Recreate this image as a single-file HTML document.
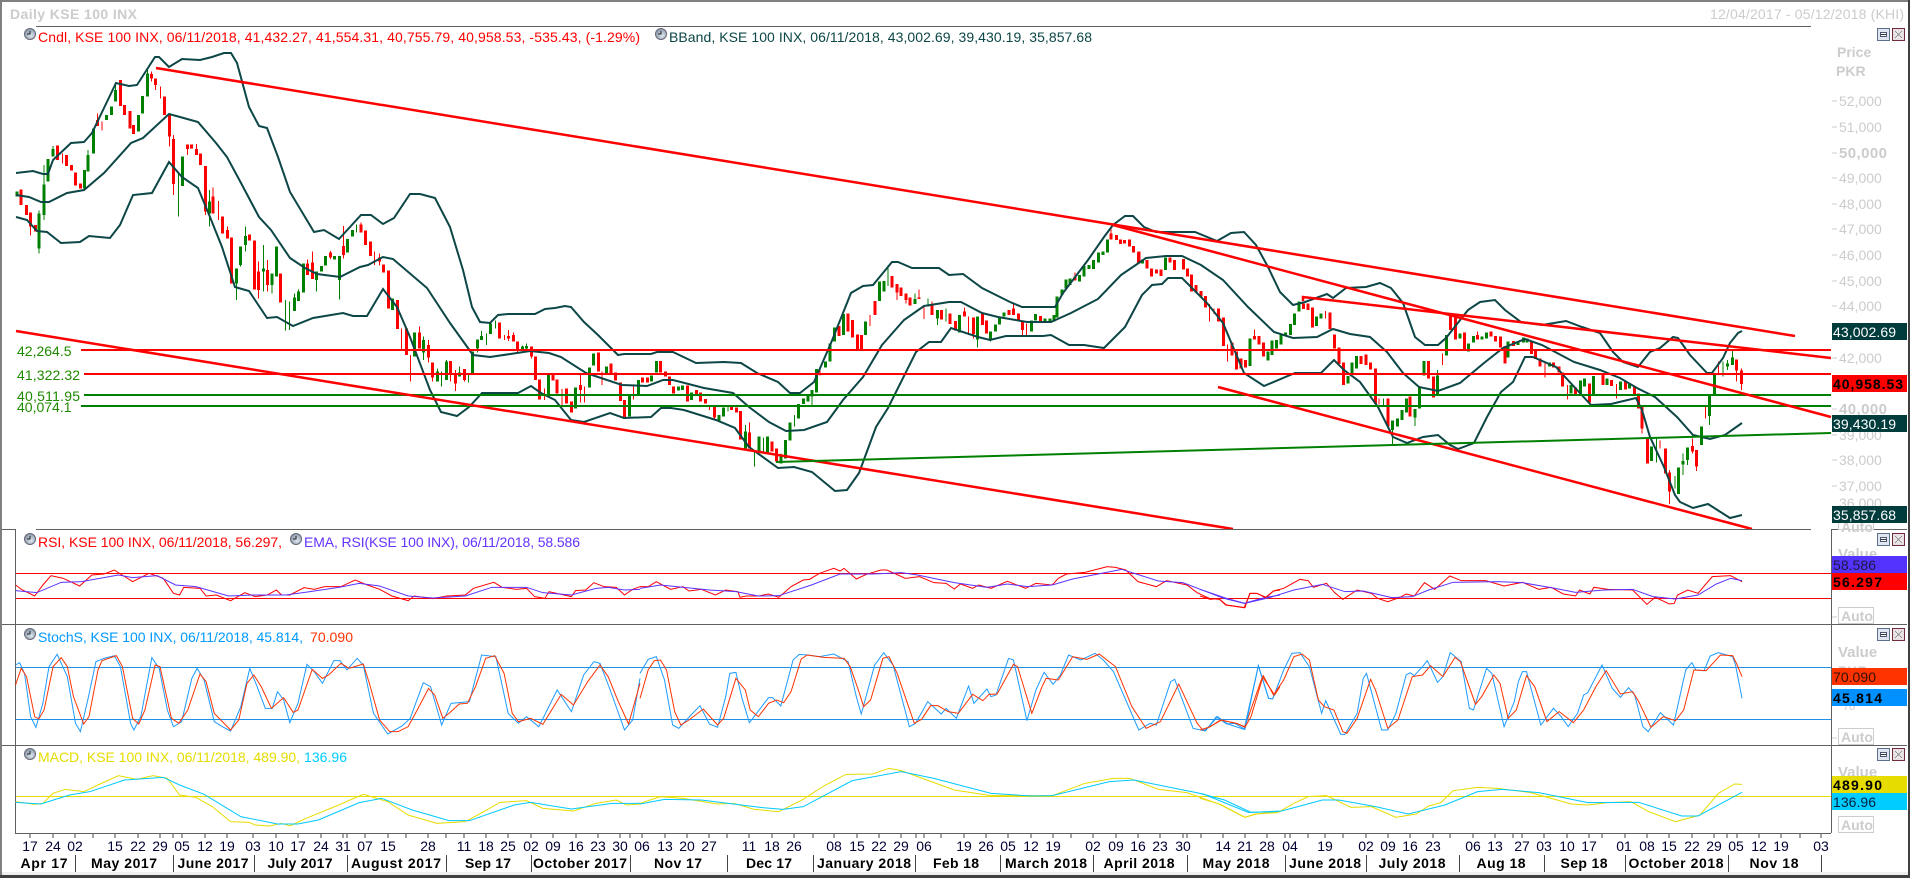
<!DOCTYPE html>
<html>
<head>
<meta charset="utf-8">
<title>Daily KSE 100 INX</title>
<style>
html,body{margin:0;padding:0;background:#fff;width:1910px;height:878px;overflow:hidden}
svg{display:block;font-family:"Liberation Sans",sans-serif;font-size:14px}
svg path,svg polyline,svg line{vector-effect:non-scaling-stroke;fill:none}
.rb{stroke:#ff0000;stroke-width:3;shape-rendering:crispEdges}
.rw{stroke:#ff0000;stroke-width:1;shape-rendering:crispEdges}
.gb{stroke:#008000;stroke-width:3;shape-rendering:crispEdges}
.gw{stroke:#008000;stroke-width:1;shape-rendering:crispEdges}
.bb{stroke:#0c4646;stroke-width:2}
.tr{stroke:#ff0000;stroke-width:2.5}
.hr{stroke:#ff0000;stroke-width:2;shape-rendering:crispEdges}
.hg{stroke:#008000;stroke-width:2;shape-rendering:crispEdges}
.dv{stroke:#606060;stroke-width:1;shape-rendering:crispEdges}
.sc{fill:#cccccc}
.d{fill:#000033;text-anchor:middle}
.m{fill:#000;font-weight:bold;text-anchor:middle;font-size:14px}
.tick{stroke:#444;stroke-width:1;shape-rendering:crispEdges}
.st{stroke:#ccc;stroke-width:1;shape-rendering:crispEdges}
</style>
</head>
<body>
<svg width="1910" height="878" viewBox="0 0 1910 878" xmlns="http://www.w3.org/2000/svg">
<defs>
<radialGradient id="ck" cx="0.6" cy="0.65" r="0.7"><stop offset="0" stop-color="#dfe7ef"/><stop offset="1" stop-color="#7f8fa3"/></radialGradient>
<g id="clock"><circle cx="0" cy="0" r="5.5" fill="url(#ck)" stroke="#667" stroke-width="1"/><path d="M0-3V0H-3" stroke="#222" stroke-width="1"/></g>
<g id="btns">
<rect x="0.5" y="0.5" width="12" height="12" fill="#dfe6f0" stroke="#5d6f8c"/><rect x="3.5" y="4.5" width="6" height="4" fill="#fff" stroke="#4a5670"/><rect x="4" y="6" width="5" height="1" fill="#333"/>
<rect x="15.5" y="0.5" width="12" height="12" fill="#e9dfe2" stroke="#6e2c3c"/><path d="M18 3L25 10M25 3L18 10" stroke="#fff" stroke-width="2.5"/><path d="M18 3L25 10M25 3L18 10" stroke="#8a8a8a" stroke-width="1"/>
</g>
</defs>
<rect width="1910" height="878" fill="#fff"/>

<!-- candles left -->
<g transform="matrix(.40816 0 0 .33333 0 0)">
<path class="gw" d="M96 632V760M108 495V660M130 438V470M216 450V465M283 255V270M361 210V220M437 520V650M513 570V680M579 850V900M601 680V755M645 735V875M667 855V880M589 795V800"/>
<path class="gb" d="M42 575V590M96 640V745M108 553V645M118 477V545M130 447V470M207 510V565M216 465V515M229 385V460M261 345V360M273 320V345M283 270V305M339 345V395M349 288V340M361 220V290M447 470V558M513 605V640M579 805V850M589 740V795M601 708V735M645 805V815M667 820V855M677 740V830"/>
<path class="rw" d="M75 680V707M153 460V490M239 340V360M250 365V392M371 215V245M381 255V270M393 260V295M415 410V440M425 405V585M459 447V465M481 432V447M503 635V645M522 562V590M535 603V660M557 680V690M633 785V895M655 780V875"/>
<path class="rb" d="M52 568V615M65 615V645M75 637V680M87 675V695M141 437V480M163 465V498M175 495V512M185 518V557M197 550V565M239 360V378M295 240V318M305 315V345M318 333V385M327 375V402M371 222V235M381 235V255M403 290V345M415 345V410M425 417V552M459 433V447M469 433V445M481 447V465M491 460V495M503 498V635M522 590V640M545 650V700M557 690V715M567 712V850M611 704V722M623 722V868M633 815V870M655 810V855"/>
</g>
<g transform="matrix(.33333 0 0 .33333 150 200)">
<path class="gw" d="M406 300V392M418 305V390M433 280V292M445 268V275M499 240V275M568 240V298M619 73V98M820 410V480M862 505V515M874 515V560M889 480V485M928 500V517M955 520V548M982 445V457M994 393V408M1010 400V435M1036 362V385M1117 437V450M1129 430V447"/>
<path class="gb" d="M433 292V333M445 275V303M460 190V278M499 215V240M514 198V215M526 168V197M553 168V178M568 168V240M592 117V157M607 90V110M727 295V330M793 398V470M820 420V458M862 515V545M889 485V540M928 517V530M968 455V520M982 418V445M994 408V420M1022 370V402M1117 440V447M1129 438V445M1195 525V590"/>
<path class="rw" d="M472 178V190M487 155V188M541 153V177M580 78V138M580 165V175M633 68V73M673 155V195M688 160V197M755 385V447M781 465V545M808 380V397M835 420V487M848 532V545M901 520V545M916 510V573M943 540V545M1063 405V420M1075 390V423M1090 398V405M1102 450V460M1144 475V440M1183 565V600"/>
<path class="rb" d="M391 220V308M472 190V225M487 188V237M541 158V172M580 138V165M633 73V97M646 92V135M661 125V168M688 173V185M700 193V218M715 212V325M742 300V387M769 385V465M808 397V445M835 435V472M848 487V532M901 483V520M916 520V550M943 507V540M1048 368V415M1075 408V415M1090 405V425M1102 425V450M1144 440V470M1156 470V540M1168 538V598"/>
</g>
<g transform="matrix(.40816 0 0 .33333 500 200)">
<path class="gw" d="M558 615V635M624 750V800M645 712V755M689 760V765M721 645V680M765 590V615M951 197V258M1017 280V297M1049 295V320M1072 355V375M1093 325V365M1170 418V443M1202 420V425M601 675V745"/>
<path class="gb" d="M185 563V625M219 503V563M229 460V497M261 500V520M317 587V650M339 540V585M371 527V545M383 483V518M437 560V572M447 557V570M469 577V600M536 645V665M547 622V650M601 695V745M634 710V755M655 710V758M689 765V790M699 720V775M711 668V722M731 612V655M743 595V612M754 582V605M765 570V590M775 507V578M797 485V502M809 430V485M819 382V425M841 342V405M896 365V405M930 245V303M941 243V275M1017 297V312M1049 313V320M1072 330V355M1126 345V398M1170 350V418M1202 395V420M1214 373V395M1224 350V373M1235 337V350M1302 362V395M1312 342V362M1335 355V365M1347 355V365M1357 345V365M1365 290V352M1377 268V285M1387 238V265M1397 235V255M1420 225V245M1431 198V230M1443 195V207M1454 180V207M1466 158V187M1477 155V165M1488 118V157"/>
<path class="rw" d="M152 567V620M197 525V608M207 560V608M250 515V555M327 560V598M525 652V660M611 668V697M784 505V527M907 345V378M973 278V300M995 300V310M1027 268V297M1039 318V357M1059 305V313M1138 322V335M1148 350V405M1160 402V415M1258 310V325M1280 390V405M1290 370V410M1409 217V243M1497 85V100M513 615V630"/>
<path class="rb" d="M130 525V542M140 538V580M163 565V610M175 605V638M197 555V570M241 457V515M272 490V520M283 518V542M295 548V603M305 600V655M349 533V547M361 533V547M393 483V517M405 515V530M415 530V555M425 560V580M459 557V605M481 570V585M491 577V605M503 597V610M525 620V652M567 620V630M579 622V638M589 633V718M611 697V745M667 725V755M677 745V785M830 378V408M853 340V395M864 360V412M876 403V450M886 405V450M919 303V345M961 228V262M973 252V278M983 263V288M995 280V300M1005 292V317M1027 293V297M1059 313V345M1082 330V358M1103 340V372M1116 363V392M1138 335V350M1160 352V402M1182 340V375M1192 362V400M1247 330V345M1258 325V345M1270 340V360M1280 362V390M1324 348V365M1409 230V240M1497 100V118M1510 105V120M1520 118V132M1530 120V130M1542 118V140M1552 138V158M1564 158V190"/>
</g>
<g transform="matrix(.40816 0 0 .33333 1060 210)">
<path class="gw" d="M792 565V590M815 660V705M870 622V648M925 480V497"/>
<path class="gb" d="M202 148V160M258 143V180M465 385V468M509 425V452M520 392V435M531 390V415M542 375V403M553 368V378M565 342V375M575 310V345M586 275V305M628 320V348M640 310V325M706 498V520M716 458V495M727 438V475M815 632V660M827 625V650M838 600V630M849 565V608M870 597V622M881 530V595M892 453V497M925 497V555M947 375V437M980 370V385M1001 400V425M1013 378V398M1034 380V388M1045 368V385M1097 395V443M1122 395V405M1135 382V398M1144 385V398M1199 458V470M1252 525V550M1275 512V553M1285 505V530M1307 498V555M1340 505V525M1373 515V540M1395 520V535"/>
<path class="rw" d="M366 282V335M377 295V312M410 403V455M476 358V378M650 303V325M781 565V583M937 430V465M1023 365V375M1188 458V502M1243 525V568M1363 522V566M1426 655V670"/>
<path class="rb" d="M193 125V160M213 150V175M224 175V200M236 178V190M247 178V198M269 143V157M280 150V180M303 147V178M312 175V200M322 193V245M333 225V247M345 243V260M356 258V292M388 295V335M400 322V408M421 397V437M432 425V478M443 445V475M455 450V472M476 378V388M487 378V403M498 398V440M597 280V297M607 280V300M619 292V352M662 308V357M672 373V415M684 413V462M694 458V525M738 438V462M750 433V465M761 458V478M773 475V582M804 565V650M858 560V620M903 453V505M915 500V562M957 315V360M969 315V388M991 368V420M1023 375V388M1056 365V380M1067 378V395M1079 380V412M1090 408V460M1111 393V408M1155 395V432M1165 420V447M1176 445V470M1209 458V472M1222 470V487M1231 487V530M1263 533V553M1297 520V578M1330 490V525M1351 510V528M1385 515V538M1407 530V555M1417 550V595M1426 590V655"/>
</g>
<g transform="matrix(.33333 0 0 .33333 1600 300)">
<path class="gw" d="M169 415V488M225 528V565M249 460V525M262 480V495M328 348V375M369 185V230M397 150V172M382 180V210"/>
<path class="gb" d="M155 440V483M235 503V582M249 483V493M262 443V480M304 380V435M328 285V348M343 225V285M382 190V200M397 172V195"/>
<path class="rw" d="M180 422V445M208 510V612M277 415V460M290 500V513M317 320V355M355 185V220M410 212V245M425 205V270"/>
<path class="rb" d="M143 415V490M196 445V520M208 518V575M277 438V455M290 450V500M410 178V212M425 212V252"/>
</g>

<!-- Bollinger -->
<polyline class="bb" points="16,173 33,171 43,174 48,174 53,160 71,143 84,142 92,133 104,108 116,83 129,86 137,85 155,57 159,57 169,67 182,59 200,60 212,57 224,53 231,53 237,63 249,107 259,126 267,128 278,157 290,192 314,232 324,230 339,239 361,215 371,215 383,224 394,218 410,194 420,194 435,198 450,227 463,270 472,307 480,322 490,323 498,315 508,314 535,314 545,309 555,308 565,306 571,307 584,322 598,335 618,355 624,354 651,354 657,352 673,352 696,363 724,362 741,363 757,373 778,382 790,393 800,393 814,382 831,343 843,313 851,293 863,286 873,285 892,262 898,262 912,268 939,268 949,275 963,274 982,288 1010,302 1022,307 1055,307 1063,293 1088,260 1104,237 1113,225 1125,216 1133,216 1144,227 1156,232 1195,232 1217,241 1231,233 1244,232 1256,245 1268,267 1280,292 1293,305 1305,302 1327,294 1333,298 1346,288 1366,287 1380,283 1391,288 1403,303 1415,337 1425,345 1438,345 1446,338 1468,310 1480,302 1495,300 1505,310 1521,322 1542,325 1566,321 1582,327 1600,333 1613,352 1623,362 1638,367 1650,352 1660,348 1673,337 1678,338 1690,355 1707,373 1712,373 1723,358 1730,343 1738,333 1742,331"/>
<polyline class="bb" points="16,195 29,197 41,202 49,202 67,193 84,190 104,173 131,143 143,138 169,114 180,117 198,122 216,143 227,157 241,183 259,217 271,230 290,258 305,268 317,274 340,277 360,267 368,265 383,257 393,259 427,288 450,323 473,355 490,357 517,353 530,351 549,353 561,357 586,373 598,377 622,385 647,386 663,380 673,380 704,388 733,393 749,407 769,422 786,431 804,430 827,422 843,400 863,377 882,345 904,320 924,306 949,302 961,302 982,313 998,317 1027,322 1051,322 1071,313 1098,299 1121,275 1146,258 1166,256 1182,256 1201,265 1223,280 1248,307 1274,332 1293,338 1317,337 1333,329 1350,334 1370,337 1387,352 1403,373 1419,387 1438,391 1460,383 1484,363 1503,348 1525,339 1542,345 1574,362 1600,370 1620,378 1637,388 1655,397 1677,417 1693,435 1710,439 1725,435 1742,423"/>
<polyline class="bb" points="16,217 27,220 37,231 47,232 61,243 80,242 89,236 110,238 120,225 133,195 152,193 169,162 182,177 198,188 210,217 222,247 235,287 249,291 267,318 277,317 293,326 313,318 343,313 353,316 367,316 383,289 397,307 410,337 430,390 441,412 457,416 469,407 482,393 518,393 531,386 541,393 555,400 571,420 584,422 610,413 624,418 651,417 661,408 671,408 684,410 716,420 735,428 749,447 778,468 794,467 812,472 835,491 847,490 859,473 876,427 888,408 916,352 929,342 941,342 951,328 978,337 990,340 1006,336 1043,336 1051,335 1069,345 1084,345 1104,348 1125,327 1142,295 1152,285 1162,284 1168,278 1182,278 1207,303 1223,323 1244,373 1264,386 1295,373 1321,373 1334,360 1344,370 1360,382 1378,407 1393,437 1407,443 1423,437 1438,435 1450,445 1458,449 1474,443 1487,417 1501,392 1513,382 1525,357 1533,357 1556,367 1566,378 1591,405 1611,404 1636,398 1642,410 1650,437 1664,467 1675,495 1680,502 1693,508 1708,504 1730,518 1742,515"/>

<!-- levels and trend lines -->
<line class="hr" x1="81" y1="350" x2="1831" y2="350"/>
<line class="hr" x1="84" y1="374" x2="1831" y2="374"/>
<line class="hg" x1="84" y1="395" x2="1831" y2="395"/>
<line class="hg" x1="81" y1="406" x2="1831" y2="406"/>
<line class="tr" x1="156" y1="68" x2="1795" y2="336"/>
<line class="tr" x1="1113" y1="225" x2="1831" y2="417"/>
<path class="tr" d="M1303 301V297L1831 358"/>
<line class="tr" x1="16" y1="331" x2="1233" y2="529"/>
<line class="tr" x1="1218" y1="387" x2="1752" y2="529"/>
<line class="hg" x1="776" y1="462" x2="1831" y2="433" style="shape-rendering:auto"/>

<g fill="#1f8a00">
<text x="17" y="356">42,264.5</text>
<text x="17" y="380" textLength="63">41,322.32</text>
<text x="17" y="401" textLength="63">40,511.95</text>
<text x="17" y="412">40,074.1</text>
</g>

<!-- white out below the price pane -->
<rect x="2" y="530" width="1829" height="303" fill="#fff"/>

<!-- dividers -->
<line class="dv" x1="36" y1="26.5" x2="1811" y2="26.5"/>
<line class="dv" x1="2" y1="529.5" x2="15" y2="529.5"/>
<line class="dv" x1="36" y1="529.5" x2="1811" y2="529.5"/>
<line class="dv" x1="1831" y1="529.5" x2="1907" y2="529.5"/>
<line class="dv" x1="2" y1="624.5" x2="1907" y2="624.5"/>
<line class="dv" x1="2" y1="745.5" x2="1907" y2="745.5"/>
<line class="dv" x1="15" y1="833.5" x2="1831" y2="833.5"/>
<line class="dv" x1="15.5" y1="529" x2="15.5" y2="833"/>
<line class="dv" x1="1831.5" y1="529" x2="1831.5" y2="833"/>

<!-- panel levels -->
<g style="shape-rendering:crispEdges">
<rect x="16" y="573" width="1815" height="1" fill="#ff0000"/>
<rect x="16" y="598" width="1815" height="1" fill="#ff0000"/>
<rect x="16" y="667" width="1815" height="1" fill="#1e90e6"/>
<rect x="16" y="719" width="1815" height="1" fill="#1e90e6"/>
<rect x="16" y="796" width="1815" height="1" fill="#e6dc00"/>
</g>

<!-- RSI -->
<g stroke-width="1" fill="none">
<g transform="matrix(.40816 0 0 .33333 0 510)">
<polyline stroke="#ff0000" points="38,225 55,240 85,258 105,225 125,197 155,205 195,228 225,195 255,192 280,180 325,215 365,190 400,205 425,250 440,255 450,232 490,235 505,258 530,255 565,272 600,248 625,260 655,255 677,240 690,255 710,255 745,233 770,238 795,230 835,230 870,210 900,225 930,238 960,258 1000,272 1015,258 1060,266 1095,258 1140,255 1160,235 1210,217 1230,232 1265,238 1290,235 1310,260 1335,265 1345,245 1400,260 1410,242 1435,240 1455,218 1480,230 1510,232 1530,255 1550,238 1568,230"/>
<polyline stroke="#5a32ff" points="38,242 90,248 150,217 200,215 290,195 325,203 385,197 430,225 480,230 560,258 620,255 700,255 760,245 830,232 880,220 930,228 1000,258 1060,264 1140,258 1205,232 1290,232 1330,248 1400,255 1460,235 1490,232 1530,240 1568,238"/>
<polyline stroke="#1e9bff" points="38,465 48,458 60,490 75,620 88,652 105,580 120,470 140,433 165,500 185,640 197,665 215,570 235,455 255,445 280,437 295,470 320,640 328,660 345,620 372,443 390,475 410,600 425,650 445,635 470,505 483,475 500,510 525,635 545,650 565,663 590,590 612,475 630,530 650,595 667,595 680,545 695,570 710,638 730,580 752,463 770,485 790,520 818,452 833,452 850,480 875,445 890,465 915,610 950,672 985,648 1005,625 1037,518 1055,530 1082,645 1105,580 1125,578 1150,575 1180,435 1215,440 1245,610 1270,640 1290,620 1320,650 1365,540 1400,605 1430,495 1455,455 1470,460 1495,540 1530,660 1550,630 1568,505"/>
<polyline stroke="#ff3300" points="38,525 52,475 65,500 85,620 95,627 108,600 130,470 150,443 165,470 180,560 205,642 218,620 240,480 250,452 285,437 300,470 325,625 340,642 355,600 380,465 392,470 420,625 438,640 460,600 490,492 505,515 525,610 565,660 585,630 605,520 622,495 640,530 665,595 695,563 718,607 730,600 765,478 790,505 805,495 835,460 855,475 890,462 905,520 930,630 955,665 975,665 1000,650 1020,605 1050,535 1065,555 1085,625 1105,605 1125,582 1145,580 1165,530 1190,445 1212,437 1235,490 1255,610 1270,635 1300,625 1330,643 1375,553 1405,585 1440,515 1470,465 1490,500 1515,575 1540,642 1568,520"/>
<polyline stroke="#e6dc00" points="38,875 85,883 105,880 130,850 160,838 205,845 240,825 290,797 335,808 375,797 410,805 440,855 480,862 520,890 565,935 610,937 625,945 660,948 690,940 710,948 750,925 830,885 890,853 950,875 1000,915 1070,940 1140,935 1185,905 1225,877 1290,872 1330,895 1405,903 1460,880 1510,870 1535,885 1568,882"/>
<polyline stroke="#00c8ff" points="38,877 100,882 170,855 220,845 305,810 400,802 440,825 500,853 590,920 680,942 730,942 780,930 880,878 935,865 1010,900 1100,932 1150,932 1260,885 1300,877 1400,897 1500,880 1568,880"/>
</g>
<g transform="matrix(.40816 0 0 .33333 640 510)">
<polyline stroke="#ff0000" points="0,230 20,230 40,215 75,238 105,230 120,243 150,238 185,255 210,240 240,245 245,262 260,258 290,258 315,252 340,262 370,230 400,210 415,208 440,190 475,175 490,183 500,175 530,207 555,193 590,180 605,180 650,205 685,200 720,218 750,220 770,237 785,222 815,235 830,225 860,235 900,214 945,235 970,220 1010,225 1025,205 1045,192 1090,187 1145,170 1165,172 1190,180 1220,215 1265,230 1290,212 1340,225 1365,248 1395,265 1420,268 1435,285 1480,293 1495,250 1510,250 1535,262 1552,243 1568,240"/>
<polyline stroke="#5a32ff" points="0,235 50,225 170,240 235,245 290,258 340,257 420,225 490,192 570,192 640,188 680,195 770,218 850,232 900,222 950,230 1010,225 1060,207 1180,178 1270,213 1330,218 1430,265 1480,280 1530,263 1568,255"/>
<polyline stroke="#1e9bff" points="0,490 20,448 40,440 60,510 80,645 95,655 110,635 125,615 147,587 170,642 190,652 210,560 220,490 235,487 250,565 268,638 315,563 325,563 345,588 375,450 390,433 410,435 440,440 475,432 510,455 530,560 542,612 575,465 597,428 620,465 660,650 675,640 705,575 738,612 750,595 775,625 805,528 818,580 850,537 860,560 872,555 903,445 915,450 948,632 970,540 990,487 1012,523 1030,495 1050,435 1080,450 1115,430 1135,450 1160,485 1222,660 1250,640 1265,645 1300,515 1310,508 1355,655 1385,663 1415,620 1440,642 1480,658 1515,467 1540,565 1550,567 1568,510"/>
<polyline stroke="#ff3300" points="0,565 20,480 35,452 50,450 65,480 85,605 100,645 120,630 155,597 190,645 205,625 235,505 258,540 270,600 290,620 315,580 335,570 352,578 370,545 395,447 410,435 450,442 500,445 515,470 535,540 548,590 565,570 595,445 610,440 630,490 672,640 690,628 712,587 730,587 755,605 780,610 815,553 840,572 855,553 875,552 915,463 925,470 960,610 985,530 995,505 1025,510 1060,440 1095,448 1125,432 1165,470 1205,590 1240,655 1275,635 1320,522 1365,640 1380,662 1425,630 1465,642 1482,650 1525,500 1555,555 1568,530"/>
<polyline stroke="#e6dc00" points="0,880 50,860 105,865 190,882 230,880 280,898 340,905 400,868 450,828 505,793 570,792 610,775 640,782 770,840 860,857 1010,857 1090,820 1160,805 1200,805 1270,838 1340,848 1420,883 1482,922 1510,912 1568,903"/>
<polyline stroke="#00c8ff" points="0,882 60,868 150,870 300,893 350,898 400,890 520,812 640,785 720,805 860,850 960,858 1010,857 1150,815 1210,810 1290,830 1380,852 1490,907 1568,905"/>
</g>
<g transform="matrix(.40816 0 0 .33333 1200 510)">
<polyline stroke="#ff0000" points="0,258 25,268 45,265 65,285 110,293 122,250 140,250 160,263 180,243 205,235 245,208 265,212 278,232 310,220 330,248 350,268 385,240 420,250 435,265 460,275 490,262 505,252 525,258 550,218 575,238 612,198 640,212 700,212 745,228 790,217 830,238 860,232 890,252 920,258 930,240 955,252 965,232 1000,238 1060,240 1095,283 1115,262 1150,282 1162,280 1170,255 1195,240 1220,250 1255,200 1300,197 1328,215"/>
<polyline stroke="#5a32ff" points="0,238 65,265 110,280 170,263 230,240 300,223 355,245 400,243 470,263 520,260 560,240 620,217 730,215 790,218 870,235 920,247 990,240 1060,238 1110,260 1165,267 1220,255 1265,222 1300,205 1328,212"/>
<polyline stroke="#1e9bff" points="0,660 15,660 40,620 65,642 85,640 110,658 143,467 168,565 178,567 205,480 225,430 245,428 268,470 298,610 308,572 345,673 355,673 385,610 400,505 408,490 445,660 460,660 480,610 505,495 515,488 525,497 545,470 557,452 582,517 595,500 613,428 640,455 660,595 670,600 702,475 715,490 745,650 770,575 780,515 790,485 800,485 835,645 866,595 885,620 902,650 925,610 940,555 950,548 985,465 1010,535 1030,562 1050,533 1065,555 1085,650 1098,665 1128,608 1160,645 1190,480 1205,458 1215,480 1235,482 1250,438 1270,428 1305,440 1312,465 1328,565"/>
<polyline stroke="#ff3300" points="0,660 25,650 50,630 90,640 110,652 125,620 155,497 180,555 205,510 230,440 250,432 268,450 290,570 305,590 328,600 350,665 360,670 385,625 418,508 430,540 460,655 485,630 520,500 545,495 565,467 595,500 625,442 638,455 675,583 690,560 720,495 735,520 755,625 775,600 800,497 820,530 850,635 880,605 915,638 940,600 970,530 995,482 1030,552 1060,545 1075,575 1105,652 1135,620 1165,632 1185,600 1210,480 1240,482 1275,435 1305,437 1315,462 1328,500"/>
<polyline stroke="#e6dc00" points="0,865 50,883 110,922 135,912 190,908 230,880 265,860 310,857 370,892 420,890 480,922 530,912 560,888 590,878 620,842 680,832 730,835 810,848 910,882 950,885 1000,878 1055,875 1100,905 1165,935 1225,915 1270,850 1310,822 1328,823"/>
<polyline stroke="#00c8ff" points="0,850 60,870 125,907 200,903 300,870 340,870 430,890 510,912 600,885 680,845 740,838 830,848 950,878 1075,877 1180,918 1220,918 1328,847"/>
</g>
</g>

<!-- header -->
<text x="10" y="19" class="sc" font-weight="bold" textLength="127">Daily KSE 100 INX</text>
<text x="1710" y="19" class="sc" textLength="194">12/04/2017 - 05/12/2018 (KHI)</text>

<!-- legends -->
<use href="#clock" x="30" y="34"/>
<text x="38" y="42" fill="#ff0000" textLength="602">Cndl, KSE 100 INX, 06/11/2018, 41,432.27, 41,554.31, 40,755.79, 40,958.53, -535.43, (-1.29%)</text>
<use href="#clock" x="661" y="34"/>
<text x="669" y="42" fill="#0c4646" textLength="423">BBand, KSE 100 INX, 06/11/2018, 43,002.69, 39,430.19, 35,857.68</text>
<use href="#clock" x="30" y="539"/>
<text x="38" y="547" fill="#ff0000" textLength="244">RSI, KSE 100 INX, 06/11/2018, 56.297,</text>
<use href="#clock" x="296" y="539"/>
<text x="304" y="547" fill="#6633ff" textLength="276">EMA, RSI(KSE 100 INX), 06/11/2018, 58.586</text>
<use href="#clock" x="30" y="634"/>
<text x="38" y="642" fill="#0099ff" textLength="265">StochS, KSE 100 INX, 06/11/2018, 45.814,</text>
<text x="310" y="642" fill="#ff3300" textLength="43">70.090</text>
<use href="#clock" x="30" y="754"/>
<text x="38" y="762" fill="#e6dc00" textLength="262">MACD, KSE 100 INX, 06/11/2018, 489.90,</text>
<text x="304" y="762" fill="#00ccff" textLength="43">136.96</text>

<!-- right scale -->
<use href="#btns" x="1877" y="28"/>
<use href="#btns" x="1877" y="533"/>
<use href="#btns" x="1877" y="628"/>
<use href="#btns" x="1877" y="748"/>
<text x="1837" y="57" class="sc" font-weight="bold">Price</text>
<text x="1836" y="76" class="sc" font-weight="bold">PKR</text>
<path class="st" d="M1832 101H1837M1832 127H1837M1832 153H1837M1832 178H1837M1832 204H1837M1832 229H1837M1832 255H1837M1832 281H1837M1832 306H1837M1832 358H1837M1832 409H1837M1832 435H1837M1832 460H1837M1832 486H1837M1832 617H1837M1832 738H1837"/>
<g class="sc">
<text x="1839" y="106">52,000</text>
<text x="1839" y="132">51,000</text>
<text x="1839" y="158" font-weight="bold" font-size="15" textLength="48">50,000</text>
<text x="1839" y="183">49,000</text>
<text x="1839" y="209">48,000</text>
<text x="1839" y="234">47,000</text>
<text x="1839" y="260">46,000</text>
<text x="1839" y="286">45,000</text>
<text x="1839" y="311">44,000</text>
<text x="1839" y="363">42,000</text>
<text x="1839" y="414" font-weight="bold" font-size="15" textLength="48">40,000</text>
<text x="1839" y="440">39,000</text>
<text x="1839" y="465">38,000</text>
<text x="1839" y="491">37,000</text>
<text x="1839" y="508">36,000</text>
<text x="1838" y="559" font-weight="bold" font-size="15">Value</text>
<text x="1838" y="657" font-weight="bold" font-size="15">Value</text>
<text x="1838" y="676" font-weight="bold">PKR</text>
<text x="1843" y="710" font-size="11">70</text>
<text x="1838" y="777" font-weight="bold" font-size="15">Value</text>
</g>
<g fill="#fff" stroke="#ccc" style="shape-rendering:crispEdges">
<rect x="1838.5" y="517.5" width="35" height="12"/>
<rect x="1838.5" y="607.5" width="35" height="16"/>
<rect x="1838.5" y="728.5" width="35" height="16"/>
<rect x="1838.5" y="816.5" width="35" height="16"/>
</g>
<g class="sc" font-weight="bold">
<text x="1841" y="532">Auto</text>
<text x="1841" y="621">Auto</text>
<text x="1841" y="742">Auto</text>
<text x="1841" y="830">Auto</text>
</g>

<!-- value tags -->
<g style="shape-rendering:crispEdges">
<rect x="1832" y="323" width="75" height="17" fill="#003c3c"/>
<rect x="1832" y="375" width="75" height="17" fill="#ff0000"/>
<rect x="1832" y="415" width="75" height="17" fill="#003c3c"/>
<rect x="1832" y="506" width="75" height="17" fill="#003c3c"/>
<rect x="1832" y="556" width="75" height="17" fill="#5533ff"/>
<rect x="1832" y="573" width="75" height="17" fill="#ff0000"/>
<rect x="1832" y="668" width="75" height="17" fill="#ff3300"/>
<rect x="1832" y="689" width="75" height="17" fill="#0090ff"/>
<rect x="1832" y="776" width="75" height="17" fill="#e6dc00"/>
<rect x="1832" y="793" width="75" height="17" fill="#00ccff"/>
</g>
<text x="1833" y="337" fill="#fff" textLength="63">43,002.69</text>
<text x="1833" y="389" fill="#000" font-weight="bold" textLength="70">40,958.53</text>
<text x="1833" y="429" fill="#fff" textLength="63">39,430.19</text>
<text x="1833" y="520" fill="#fff" textLength="63">35,857.68</text>
<text x="1833" y="570" fill="#1a1a40" textLength="43">58.586</text>
<text x="1833" y="587" fill="#000" font-weight="bold" textLength="49">56.297</text>
<text x="1833" y="682" fill="#301000" textLength="43">70.090</text>
<text x="1833" y="703" fill="#000" font-weight="bold" textLength="49">45.814</text>
<text x="1833" y="790" fill="#000" font-weight="bold" textLength="49">489.90</text>
<text x="1833" y="807" fill="#002040" textLength="43">136.96</text>

<!-- date axis ticks -->
<path class="tick" d="M30 834V838M53 834V838M75 834V838M93 834V838M115 834V838M138 834V838M160 834V838M173 834V838M182 834V838M205 834V838M227 834V838M253 834V838M276 834V838M298 834V838M321 834V838M343 834V838M347 834V838M365 834V838M388 834V838M406 834V838M428 834V838M446 834V838M464 834V838M486 834V838M508 834V838M531 834V838M553 834V838M576 834V838M598 834V838M620 834V838M630 834V838M642 834V838M665 834V838M687 834V838M709 834V838M727 834V838M749 834V838M772 834V838M794 834V838M813 834V838M834 834V838M857 834V838M879 834V838M901 834V838M916 834V838M924 834V838M941 834V838M964 834V838M986 834V838M1008 834V838M1031 834V838M1053 834V838M1071 834V838M1093 834V838M1116 834V838M1138 834V838M1160 834V838M1183 834V838M1187 834V838M1201 834V838M1223 834V838M1245 834V838M1267 834V838M1285 834V838M1290 834V838M1308 834V838M1325 834V838M1343 834V838M1366 834V838M1388 834V838M1410 834V838M1433 834V838M1450 834V838M1473 834V838M1495 834V838M1513 834V838M1522 834V838M1544 834V838M1567 834V838M1589 834V838M1602 834V838M1625 834V838M1647 834V838M1669 834V838M1692 834V838M1714 834V838M1727 834V838M1737 834V838M1759 834V838M1781 834V838M1800 834V838M1821 834V838"/>
<g class="d">
<text x="30" y="851">17</text><text x="53" y="851">24</text><text x="75" y="851">02</text><text x="115" y="851">15</text><text x="138" y="851">22</text><text x="160" y="851">29</text><text x="182" y="851">05</text><text x="205" y="851">12</text><text x="227" y="851">19</text><text x="253" y="851">03</text><text x="276" y="851">10</text><text x="298" y="851">17</text><text x="321" y="851">24</text><text x="343" y="851">31</text><text x="365" y="851">07</text><text x="388" y="851">15</text><text x="428" y="851">28</text><text x="464" y="851">11</text><text x="486" y="851">18</text><text x="508" y="851">25</text><text x="531" y="851">02</text><text x="553" y="851">09</text><text x="576" y="851">16</text><text x="598" y="851">23</text><text x="620" y="851">30</text><text x="642" y="851">06</text><text x="665" y="851">13</text><text x="687" y="851">20</text><text x="709" y="851">27</text><text x="749" y="851">11</text><text x="772" y="851">18</text><text x="794" y="851">26</text><text x="834" y="851">08</text><text x="857" y="851">15</text><text x="879" y="851">22</text><text x="901" y="851">29</text><text x="924" y="851">06</text><text x="964" y="851">19</text><text x="986" y="851">26</text><text x="1008" y="851">05</text><text x="1031" y="851">12</text><text x="1053" y="851">19</text><text x="1093" y="851">02</text><text x="1116" y="851">09</text><text x="1138" y="851">16</text><text x="1160" y="851">23</text><text x="1183" y="851">30</text><text x="1223" y="851">14</text><text x="1245" y="851">21</text><text x="1267" y="851">28</text><text x="1290" y="851">04</text><text x="1325" y="851">19</text><text x="1366" y="851">02</text><text x="1388" y="851">09</text><text x="1410" y="851">16</text><text x="1433" y="851">23</text><text x="1473" y="851">06</text><text x="1495" y="851">13</text><text x="1522" y="851">27</text><text x="1544" y="851">03</text><text x="1567" y="851">10</text><text x="1589" y="851">17</text><text x="1624" y="851">01</text><text x="1647" y="851">08</text><text x="1669" y="851">15</text><text x="1692" y="851">22</text><text x="1714" y="851">29</text><text x="1736" y="851">05</text><text x="1759" y="851">12</text><text x="1781" y="851">19</text><text x="1821" y="851">03</text>
</g>
<path class="tick" d="M75.5 855V872M173.5 855V872M254.5 855V872M347.5 855V872M446.5 855V872M531.5 855V872M630.5 855V872M727.5 855V872M813.5 855V872M915.5 855V872M1000.5 855V872M1093.5 855V872M1187.5 855V872M1285.5 855V872M1366.5 855V872M1459.5 855V872M1544.5 855V872M1625.5 855V872M1728.5 855V872M1821.5 855V872"/>
<g class="m">
<text x="44" y="868" textLength="47">Apr 17</text>
<text x="124" y="868" textLength="66">May 2017</text>
<text x="213" y="868" textLength="71">June 2017</text>
<text x="300" y="868" textLength="65">July 2017</text>
<text x="396" y="868" textLength="90">August 2017</text>
<text x="488" y="868" textLength="46">Sep 17</text>
<text x="580" y="868" textLength="94">October 2017</text>
<text x="678" y="868" textLength="48">Nov 17</text>
<text x="769" y="868" textLength="46">Dec 17</text>
<text x="864" y="868" textLength="94">January 2018</text>
<text x="956" y="868" textLength="46">Feb 18</text>
<text x="1046" y="868" textLength="82">March 2018</text>
<text x="1139" y="868" textLength="71">April 2018</text>
<text x="1236" y="868" textLength="67">May 2018</text>
<text x="1325" y="868" textLength="72">June 2018</text>
<text x="1412" y="868" textLength="67">July 2018</text>
<text x="1501" y="868" textLength="49">Aug 18</text>
<text x="1584" y="868" textLength="47">Sep 18</text>
<text x="1676" y="868" textLength="95">October 2018</text>
<text x="1774" y="868" textLength="49">Nov 18</text>
</g>

<!-- window frame -->
<g style="shape-rendering:crispEdges">
<rect x="2" y="872" width="1906" height="3" fill="#eeeeee"/>
<rect x="0" y="0" width="1910" height="2" fill="#808080"/>
<rect x="0" y="0" width="2" height="876" fill="#808080"/>
<rect x="1908" y="0" width="2" height="878" fill="#404040"/>
<rect x="0" y="875" width="1910" height="3" fill="#404040"/>
</g>
</svg>
</body>
</html>
